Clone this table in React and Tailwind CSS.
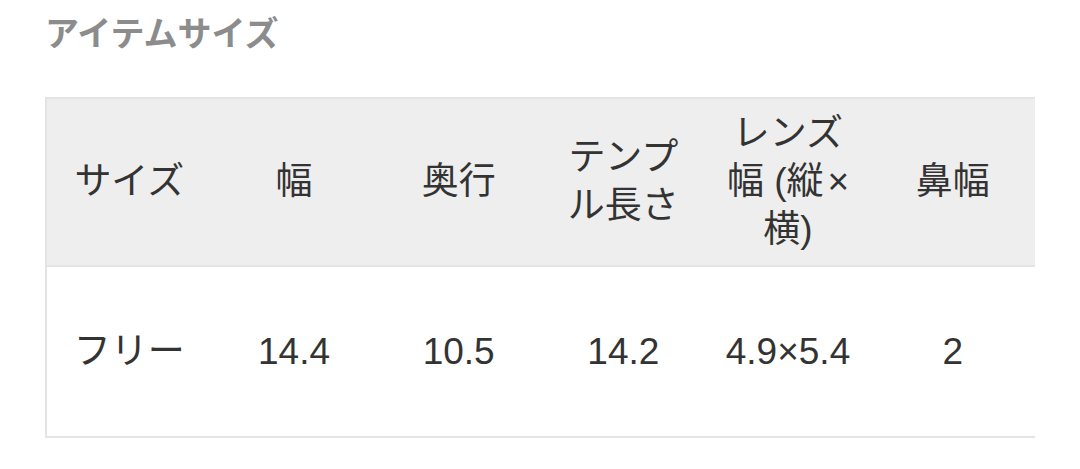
export default function App() {
  const font = { fontFamily: '"Liberation Sans", "Noto Sans CJK JP", sans-serif' };
  const head = [
    ["サイズ"],
    ["幅"],
    ["奥行"],
    ["テンプ", "ル長さ"],
    [
      "レンズ",
      <>
        幅 (縦<span className="ml-[4px]">×</span>
      </>,
      "横)",
    ],
    ["鼻幅"],
  ];
  const body = ["フリー", "14.4", "10.5", "14.2", "4.9×5.4", "2"];
  return (
    <div className="w-[1080px] h-[469px] bg-white px-[45px] pt-[11px] overflow-hidden" style={font}>
      <div className="text-[34px] leading-[46px] font-bold text-[#8c8c8c]">アイテムサイズ</div>
      <div className="mt-[40px] w-[990px] border-l-2 border-[#e4e4e4]">
        <div className="grid grid-cols-6 h-[170px] bg-[#eeeeee] border-t-2 border-b-2 border-[#e4e4e4] items-center">
          {head.map((lines, i) => (
            <div key={i} className="text-center text-[37px] leading-[48px] text-[#333333]">
              {lines.map((l, j) => (
                <div key={j} className="whitespace-pre">{l}</div>
              ))}
            </div>
          ))}
        </div>
        <div className="grid grid-cols-6 h-[171px] bg-white border-b-2 border-[#e4e4e4] items-center">
          {body.map((t, i) => (
            <div key={i} className="text-center text-[37px] leading-[48px] text-[#333333] whitespace-nowrap">
              {t}
            </div>
          ))}
        </div>
      </div>
    </div>
  );
}
